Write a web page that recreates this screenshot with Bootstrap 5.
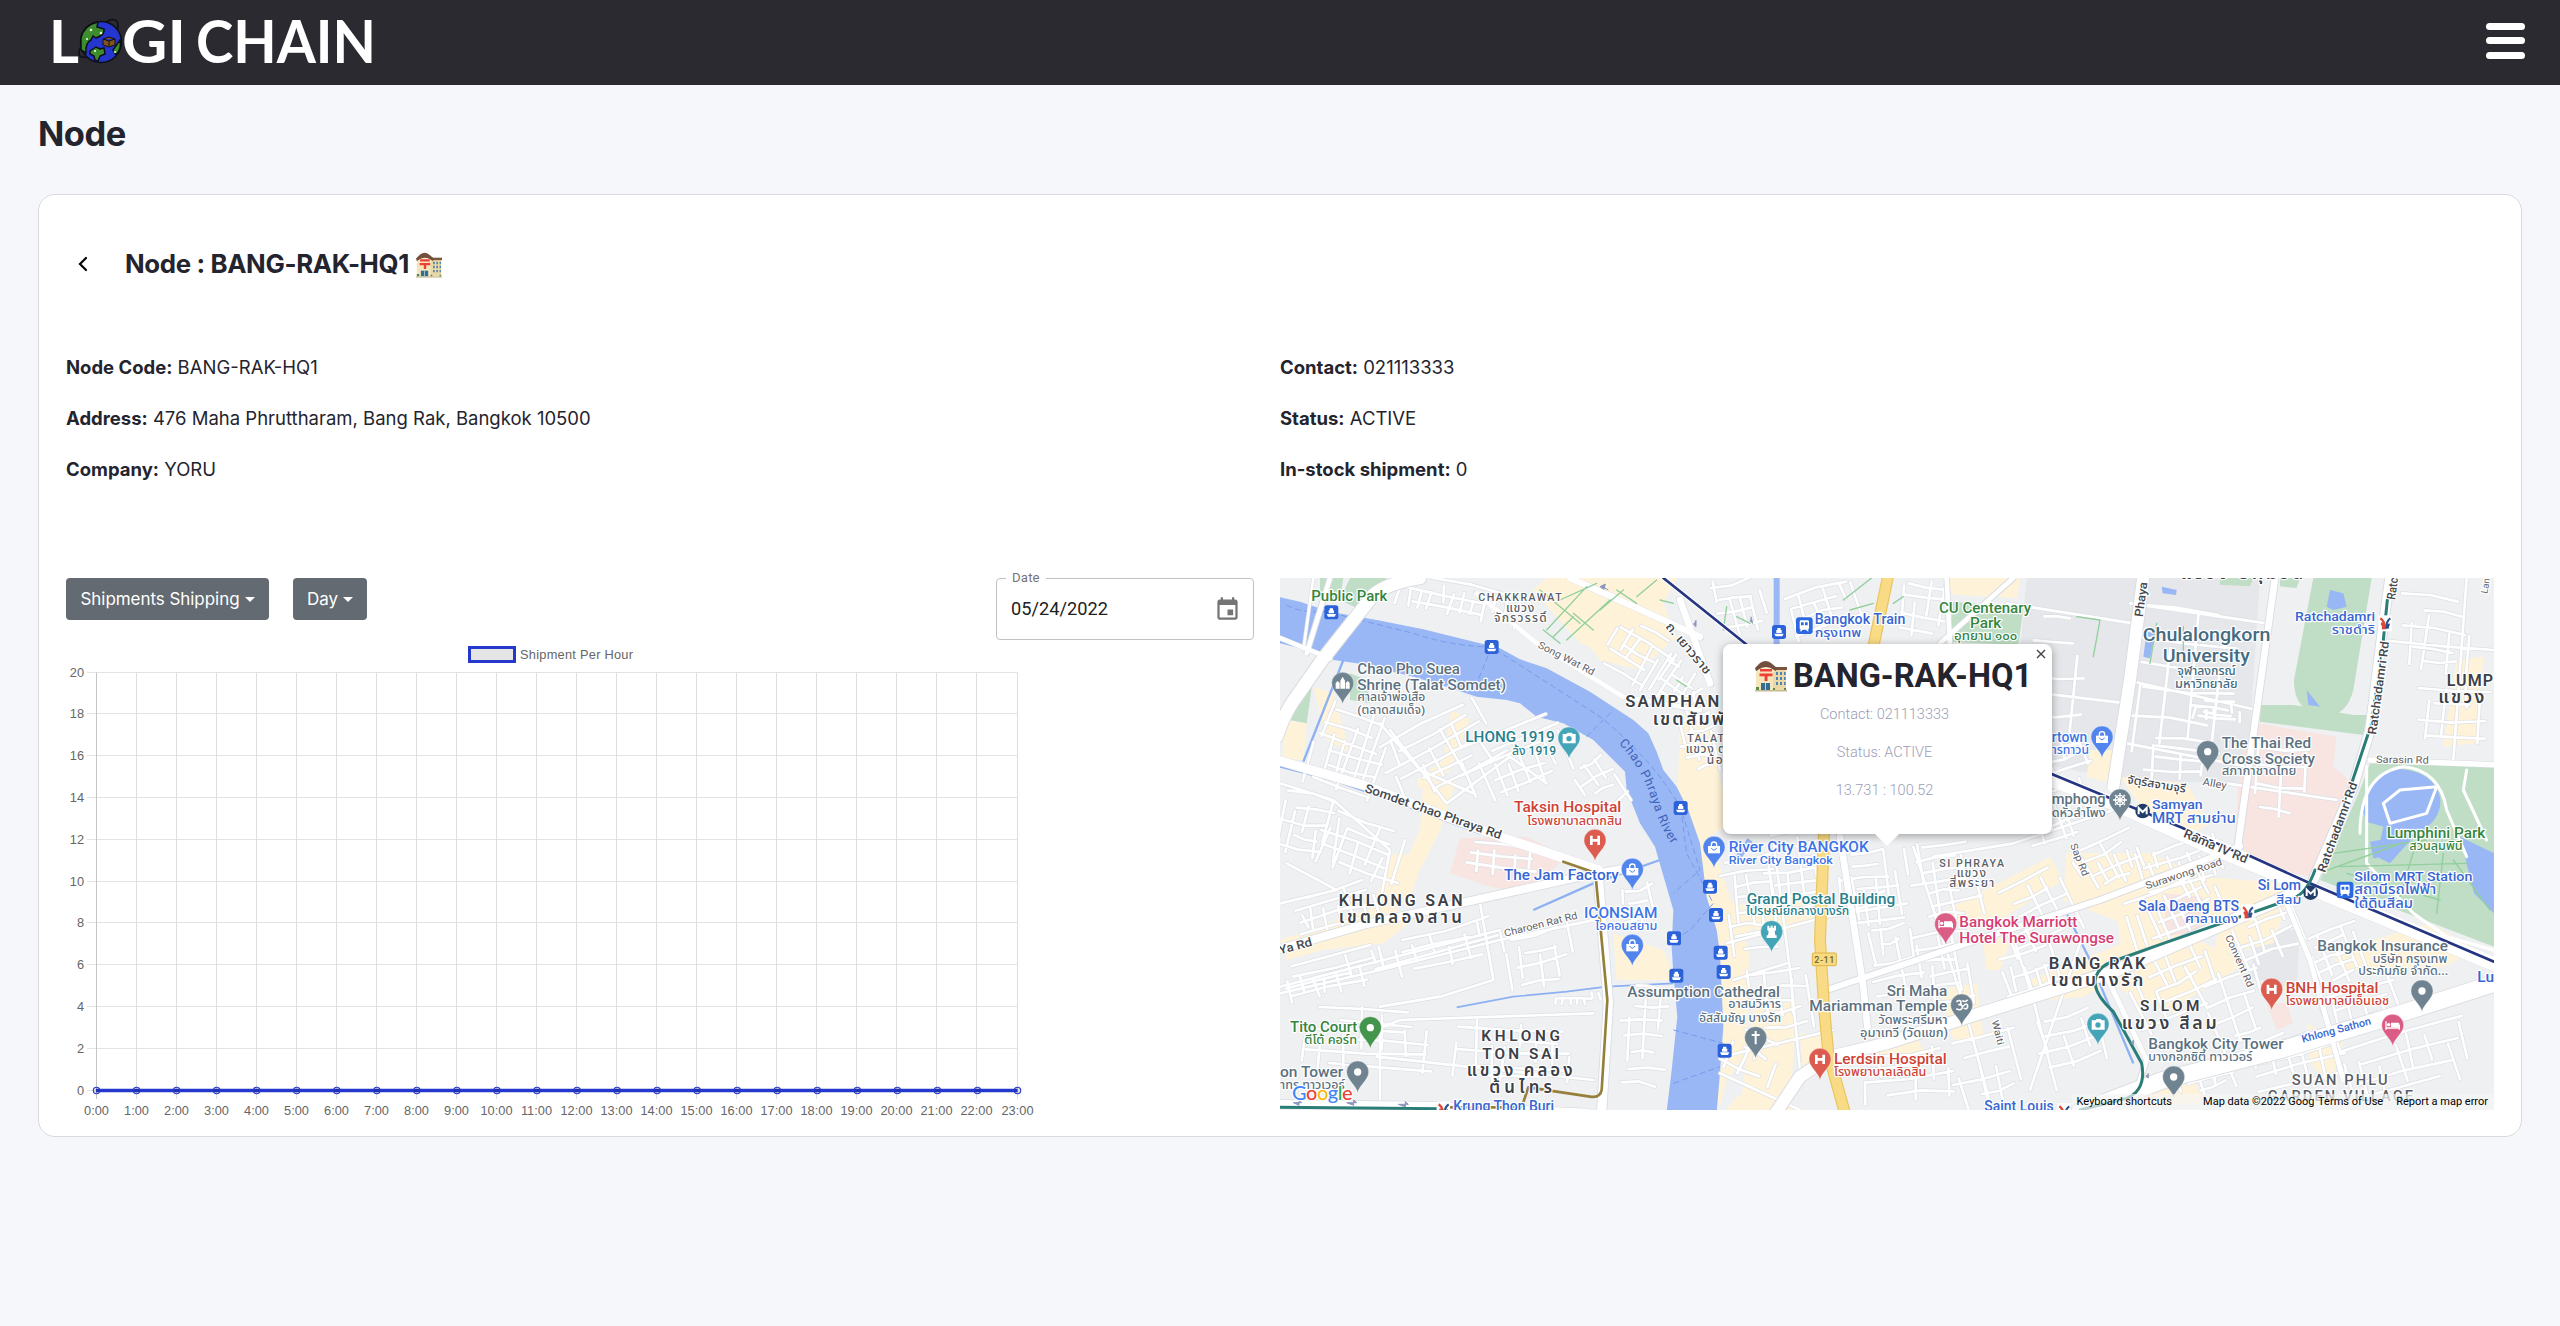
<!DOCTYPE html>
<html lang="en">
<head>
<meta charset="utf-8">
<meta name="viewport" content="width=device-width, initial-scale=1">
<title>Logi Chain - Node</title>
<link href="https://cdn.jsdelivr.net/npm/bootstrap@5.3.0/dist/css/bootstrap.min.css" rel="stylesheet">
<style>
body{background:#f5f7fb;color:#24242e;font-family:Inter,"Liberation Sans",sans-serif;font-size:18px}
.topbar{background:#2b2a30;height:85px;padding:0 35px 0 52px}
.brand-logo{width:324px;height:50px;margin-top:-1px;overflow:visible}
.brand-logo text{font-family:Lato,sans-serif;font-weight:700;font-size:58.5px;fill:#fff}
.menu-btn{width:39px;height:36px;margin-top:-4px}
.menu-btn span{height:7px;border-radius:4px;background:#fff}
.page-wrap{padding:0 38px}
.page-title{font-size:34.5px;font-weight:700;line-height:42px;margin:28px 0 39px;letter-spacing:-.5px}
.panel{background:#fff;border:1px solid #dadadc;border-radius:17px;height:943px;padding:0 27px}
.head-row{padding:49px 0 0 12px;height:159px}
.head-row .chev{width:10px;height:16px;margin:12px 37px 0 0}
.head-row h2{font-size:25.8px;font-weight:700;line-height:40px;margin:0 7px 0 0;letter-spacing:-.35px}
.info-line{line-height:27px;margin-bottom:24px;font-size:18.5px;white-space:nowrap}
.info-area{height:224px}
.kit-btn{background:#636a71;color:#fff;border:0;border-radius:4px;height:42px;padding:0 14px;font-size:17px;line-height:42px;white-space:nowrap}
.kit-btn:after{margin-left:5px;vertical-align:3px;border-top-width:5.5px;border-left-width:5px;border-right-width:5px}
.btn-a{width:203px;letter-spacing:-.05px}.btn-b{width:74px;margin-left:24px}
.tool-row{height:62px;padding-right:26px}
.date-box{width:258px;height:62px;border:1px solid #c2c2c2;border-radius:4px;font-family:Roboto,sans-serif;padding:0 12px 0 14px}
.date-box .lbl{top:-9px;left:9px;background:#fff;padding:0 6px;font-size:13.2px;line-height:16px;color:#757575;letter-spacing:.15px}
.date-box .val{font-size:18.2px;letter-spacing:.02px;color:#212121}
.chart-svg{display:block}
.chart-svg text{font-family:"Liberation Sans",Arial,sans-serif;font-size:12.8px;fill:#666}
.map-box{width:1214px;height:532px;background:#eff0f2}
.map-box svg.city{display:block;font-family:Roboto,"Noto Sans Thai","Noto Sans",sans-serif}
.info-pop{left:443px;top:66px;width:329px;height:190px;background:#fff;border-radius:8px;box-shadow:0 2px 8px rgba(0,0,0,.35);font-family:Roboto,sans-serif;padding:13px 0 0}
.info-pop:after{content:"";position:absolute;left:152px;top:190px;border:12px solid transparent;border-top-color:#fff}
.info-pop h3{font-size:32.6px;line-height:38px;font-weight:700;margin:0 0 0 32px;white-space:nowrap}
.info-pop h3 svg{margin:0 6px 0 0}
.info-pop p{font-size:14.5px;font-weight:300;line-height:18px;color:#9d9db5;margin:0 0 20px -6px;text-align:center}
.info-pop .facts{padding-top:11px}
.pop-x{top:4px;right:5px;width:12px;height:12px}
.credit{right:0;bottom:0;height:16px;background:rgba(245,245,245,.7);font:11px/16px Roboto,sans-serif;color:#000;padding:0 6px 0 5px;white-space:nowrap}
.f-case{stroke:#dcdfe4;stroke-width:12}.f-fill{stroke:#fff;stroke-width:8}
.roadset{fill:none;stroke-linejoin:round;stroke-linecap:round}
.lab{paint-order:stroke;stroke:#fff;stroke-width:7;stroke-linejoin:round}
.poi{fill:#5c717f;font-weight:500}.uni{fill:#456b80;font-weight:500}.grn{fill:#35853f;font-weight:500}
.blu{fill:#3766d2;font-weight:500}.blb{fill:#3c74e8;font-weight:500}.tea{fill:#26808c;font-weight:500}.red{fill:#cd4336;font-weight:500}
.pnk{fill:#d53c72;font-weight:500}.dis{fill:#3c4047;font-weight:600}.ara{fill:#5a5e65;font-weight:500}.str{fill:#5f6368}.stb{fill:#44474c;font-weight:500}
</style>
<script src="https://cdn.jsdelivr.net/npm/bootstrap@5.3.0/dist/js/bootstrap.bundle.min.js"></script>
</head>
<body>
<svg width="0" height="0" class="position-absolute"><defs>
<symbol id="office" viewBox="0 0 32 32">
<path d="M1 10h19v20H1z" fill="#f3e6bd"/><path d="M18 9h13v21H18z" fill="#ead9a6"/><path d="M17 7h15v3H17z" fill="#7b5540"/>
<path d="M0 8 5 3Q11-1 16 3l6 5-1 3Q11 5 1 11z" fill="#73503e"/><path d="M3 10Q11 4 19 10v2H3z" fill="#f8edcd"/>
<path d="M5 9h12v2.600H5zM4.500 13.500h13v2.800h-5V21H9.600v-4.700H4.500z" fill="#ee4035"/>
<path d="M21 12h2v3h-2zm4 0h2v3h-2zm4 0h1.700v3H29zm-8 5h2v3h-2zm4 0h2v3h-2zm4 0h1.700v3H29zm-8 5h2v3h-2zm4 0h2v3h-2zm4 0h1.700v3H29z" fill="#4e84b5"/>
<path d="M6 23h9v7H6z" fill="#376c91"/><path d="M10 23h1v7h-1z" fill="#b7d3dd"/><path d="M1 27h3v3H1zm17 1h2v2h-2zm11 0h2v2h-2z" fill="#5d8a45"/><path d="M0 30h32v1.500H0z" fill="#c8b994"/>
</symbol></defs></svg>

<nav class="topbar d-flex align-items-center justify-content-between">
<svg class="brand-logo" viewBox="52 17 324 50">
<text x="49" y="62.500" textLength="30" lengthAdjust="spacingAndGlyphs">L</text>
<text x="122" y="62.500" textLength="64" lengthAdjust="spacingAndGlyphs">GI</text>
<text x="196" y="62.500" textLength="180" lengthAdjust="spacingAndGlyphs">CHAIN</text>
<g stroke="#0d1014" stroke-width="1.500"><path d="M106 22Q117 16 118 25Q118 31 113 37M80 48Q76 59 87 57" fill="none"/><circle cx="101" cy="42" r="20.500" fill="#2436cf"/>
<path d="M98 22Q84 25 81 38L81 50 86 53Q85 43 91 40L93 36 96 38Q105 35 104 29L97 27z" fill="#3d8c2e"/>
<path d="M90 51l6-4 4 2 4-1 1 6-5 2-2 5-3-1-1-4-4-2zM113 50l7-10q2 8-4 15z" fill="#3d8c2e"/>
<path d="m103 39 6-2 6 2v6l-6 2-6-2zM103 39l6 2 6-2M109 41v5" fill="#81531a" stroke-width="1"/></g>
<g fill="#dfffd8"><circle cx="91" cy="30" r="1.300"/><circle cx="101" cy="33" r="1.300"/><circle cx="87" cy="39" r="1.100"/><circle cx="95" cy="51" r="1.100"/><circle cx="115" cy="52" r="1.100"/></g>
</svg>
<div class="menu-btn d-flex flex-column justify-content-between"><span></span><span></span><span></span></div>
</nav>

<main class="page-wrap">
<h1 class="page-title">Node</h1>
<section class="panel">
<div class="head-row d-flex align-items-start">
<svg class="chev" viewBox="0 0 10 16"><path d="M8 2 2 8l6 6" fill="none" stroke="#000" stroke-width="2.200" stroke-linecap="round"/></svg>
<h2>Node : BANG-RAK-HQ1</h2>
<svg width="26" height="26" class="mt-2"><use href="#office"/></svg>
</div>
<div class="row g-0 info-area">
<div class="col-6"><div class="info-line"><b>Node Code:</b> BANG-RAK-HQ1</div><div class="info-line"><b>Address:</b> 476 Maha Phruttharam, Bang Rak, Bangkok 10500</div><div class="info-line"><b>Company:</b> YORU</div></div>
<div class="col-6"><div class="info-line"><b>Contact:</b> 021113333</div><div class="info-line"><b>Status:</b> ACTIVE</div><div class="info-line"><b>In-stock shipment:</b> 0</div></div>
</div>
<div class="row g-0">
<div class="col-6">
<div class="tool-row d-flex align-items-start">
<button class="btn kit-btn btn-a dropdown-toggle">Shipments Shipping</button>
<button class="btn kit-btn btn-b dropdown-toggle">Day</button>
<div class="date-box position-relative d-flex align-items-center justify-content-between ms-auto"><span class="lbl position-absolute">Date</span><span class="val">05/24/2022</span>
<svg width="27" height="27" viewBox="0 0 24 24" fill="#757575"><path d="M17 12h-5v5h5v-5zM16 1v2H8V1H6v2H5c-1.110 0-1.990.9-1.990 2L3 19c0 1.100.89 2 2 2h14c1.100 0 2-.9 2-2V5c0-1.100-.9-2-2-2h-1V1h-2zm3 18H5V8h14v11z"/></svg></div>
</div>
<svg class="chart-svg" id="chart" width="1000" height="484" viewBox="66 640 1000 484"></svg>
</div>
<div class="col-6">
<div class="map-box position-relative overflow-hidden">
<svg class="city" width="1214" height="532" viewBox="0 24 3642 1596" preserveAspectRatio="none">
<defs>
<path id="pinshape" d="M0 0C-4-22-33-38-33-62A33 33 0 1 1 33-62C33-38 4-22 0 0z"/>
<path id="riverline" d="M1016 520Q1085 595 1115 690T1178 826"/>
<g id="ferry"><rect x="-21" y="-21" width="42" height="42" rx="8" fill="#2c62d9"/><path d="M-14 5h28l-4 8h-20zM-8 3V-6h3v-6h10v6h3V3z" fill="#fff"/></g>
<g id="train"><rect x="-25" y="-25" width="50" height="50" rx="9" fill="#2c68e2"/><path d="M-14-12q0-4 4-4h20q4 0 4 4V8q0 4-4 4l4 5h-5l-4-5h-10l-4 5h-5l4-5q-4 0-4-4z" fill="#fff"/><path d="M-10-10h8v9h-8zM2-10h8v9H2z" fill="#2c68e2"/></g>
<g id="mrt"><circle r="22" fill="#213c66"/><path d="M-12 10V-9l12 12L12-9v19" fill="none" stroke="#fff" stroke-width="6"/></g>
<g id="bts"><rect x="-20" y="-24" width="40" height="48" fill="#fff"/><path d="M-14-15Q0-6 0 18M-12 0Q-4 2-6 18" stroke="#dd4733" stroke-width="7" fill="none"/><path d="M16-15Q2-6 5 16M14 3Q8 4 9 16" stroke="#2b4d90" stroke-width="6" fill="none"/></g>
<g id="lanes"></g>
<g id="avenues">
<path d="M420 24Q320 40 280 75L130 265 35 400Q10 440-10 500" stroke-width="38"/>
<path d="M-10 570L250 645 660 800 955 900" stroke-width="28"/>
<path d="M-10 1140L260 1062 550 998 900 920 1020 898" stroke-width="24"/>
<path d="M953 900L985 1300 965 1625" stroke-width="28"/>
<path d="M0 1602L480 1608 920 1628" stroke-width="24"/>
<path d="M870 24L1150 150 1260 200M1200 90L1290 340" stroke-width="20"/>
<path d="M-10 200L150 265M150 24L80 250" stroke-width="14"/>
<path d="M590 70L770 220 1030 380 1260 420" stroke-width="14"/>
<path d="M1680 800L1750 1250 1762 1370" stroke-width="20"/>
<path d="M1640 1260L2060 1120 2460 990 2880 830" stroke-width="18"/>
<path d="M3090 950L2500 1205 2100 1330 1820 1420 1650 1460 1560 1520 1490 1625" stroke-width="36"/>
<path d="M3660 1235L3300 1350 3000 1440 2650 1530 2400 1625" stroke-width="50"/>
<path d="M2290 620L2500 700 2800 835 3200 1000 3660 1190" stroke-width="42"/>
<path d="M2590 20L2550 330 2500 650" stroke-width="36"/>
<path d="M2985 24L2940 350 2875 820" stroke-width="20"/>
<path d="M3330 24L3305 200 3270 480 3220 650 3100 930" stroke-width="28"/>
<path d="M3270 570L3660 585" stroke-width="16"/>
<path d="M2200 24L1980 220M2000 24L2010 230" stroke-width="14"/>
<path d="M2470 1200L2600 1470 2570 1560M3020 1000L3090 1170 3190 1530" stroke-width="15"/>
</g>
</defs>
<rect width="3642" height="1620" fill="#eff0f2"/>
<g fill="#e5e7ea"><path d="M2240 24L2940 24 2900 640 2520 630 2190 560zM2930 1080h130l-10 180-140-40z"/></g>
<g fill="#fef3d8">
<path d="M800 24L1190 24 1150 100 1190 200 1080 300 960 270 930 230 900 220 820 130 760 60zM100 350l60 20 50 180-70-40zM10 450l70 10-10 110-60-5zM515 420l55 30-60 150-90 60-10-30 80-60zM430 640l100-10-50 150-60 120-50-10 50-110zM340 850l90 10-40 130-60 30-50-20zM0 1110l320-110 80 50-90 70-180 20-110 30zM1000 1090l150 50 35 90-175 0z"/>
<path d="M1200 430l80 10 70 320-60 40 60 180 60 170-10 300-60 80-20 80-90-400-10-200-30-220zM1300 980l150 40-70 120-90-10zM1390 1030l180-60 40 80-160 60zM1420 1310l130-20-20 330h-150zM1560 1390l100 10-20 60-70 60zM1790 1400l120 0 30 60-140 0zM1980 1260l110-20 20 160-90 10zM1960 1040l350-180 40 70-220 140z"/>
<path d="M2110 1120l90-30-40 110-40 0zM2250 1230l380-150 80 40-300 160-120 10zM2360 850l250 0 300 130-200 150-360-140zM2500 900l520 40-60 140-440 40zM2430 540h80l-15 100-75-20zM2520 620l200 20 70 120-50 30-150-70zM2840 930l200 10-60 180-180 40zM2900 1180l-200 120-120 0-150-110 280-100zM2600 1160l120-20-30 190-60-10zM3150 1150l300-90 140 80-100 50-300 10zM3080 1360l110 60-40 120-60-60zM3530 270l80-10-20 260-100 10zM2580 1510l160 20 40 70-190 10zM1990 24l230 0-10 60-190-10zM1370 1580l130-10 50 60-220 0z"/>
</g>
<g fill="#f8e4e1"><path d="M540 805l200-5 120 60-120 110-110-20-120-40zM2930 460l240 40-10 90 70 60-140 270-230-50 20-300zM2650 970l120 10-10 100-100 20zM2960 1300l60 0 20 60-50 20z"/></g>
<g fill="#bfdec5">
<path d="M120 24h70l-10 60-60 10zM210 24l110 0-60 105-80-40zM30 450l70-130-20 140zM210 310l50 20 10 70-60-10zM2020 95l210 20-15 110-210-10zM3100 24h175L3220 360Q3200 440 3130 440Q3040 425 3042 330zM2940 405l100 0 180 30 40 0-10 60-310-40zM3270 580l372 10v540L3120 930 3160 840 3240 660zM2820 24h100l-10 25-90-5zM3000 24h60l-10 30-50-5z"/></g>
<g fill="#9ab7f5">
<path d="M0 82L60 95 150 125 290 150 430 178 560 210 660 235 720 268 800 295 930 365 1060 450 1105 490 1130 545 1150 600 1190 650 1225 720 1260 820 1280 980 1310 1080 1320 1150 1330 1370 1320 1510 1310 1625H1160L1175 1500 1192 1340 1180 1210 1175 1130 1180 1020 1145 900 1125 830 1080 760 1040 660 1035 605 940 510 850 460 770 440 720 400 680 390 590 380 500 350 400 320 230 280 160 270 60 235 0 220z"/>
<path d="M3248 720Q3260 610 3360 597Q3460 605 3480 680Q3490 750 3410 790L3330 880 3290 860 3310 770 3260 755zM3150 60l40 10 10 40-40 10-20-10zM3080 360l40 50-35-5zM2645 50l45 10-2 15-40-5zM2600 185l25 5-15 75-20-5zM3540 800l102 50v180l-60-60zM3270 815l60-10-40 60-10 0z"/>
<path d="M1490 24V230M1410 810L1370 870" stroke="#9ab7f5" stroke-width="18" fill="none"/></g>
<g fill="none" stroke="#8db0f3" stroke-width="7"><path d="M190 270L70 575M0 590L160 630 360 700 600 790M660 812L850 870M760 1020L940 940 1140 870M2360 1030L2425 1160 2560 1480"/><path d="M530 1312L700 1280 860 1265 980 1250 1180 1240" stroke-width="5"/></g>
<g fill="none" stroke="#779bea" stroke-width="3" stroke-dasharray="18 10"><path d="M20 105Q60 130 140 125L400 190Q520 230 635 231L960 440Q1120 570 1202 714L1260 900 1180 970M635 231L590 340M920 500L1000 420M1202 714L1220 850 1300 1000 1230 1080 1182 1110M1180 1380L1330 1420M1180 1540L1320 1490"/></g>
<g class="roadset"><use href="#lanes" class="f-case"/><use href="#lanes" class="f-fill"/></g>
<g class="roadset" stroke="#d9dce1"><use href="#avenues" transform="translate(-2.500 -2)"/><use href="#avenues" transform="translate(2.500 2)"/></g>
<g class="roadset" stroke="#fff"><use href="#avenues"/></g>
<path d="M3240 790Q3240 610 3370 590Q3480 600 3500 720L3560 860M3310 700l50-40 110-10M3310 700l20 60 110-30 30-80M3260 590v290l140 150 100 70 140 40M3560 600l-10 60 70 150" class="roadset" stroke="#fff" stroke-width="9"/>
<g class="roadset" stroke="#91cf9d" stroke-width="4"><path d="M780 60l120 100M800 180l120-130M840 90l110-50M860 210l130-120M880 130l60 50M960 120l70-60M1010 60l60 40M1070 80l60-50M790 180l50 40M820 200l60-60M1140 90l40 10M1190 330l30 20M1340 110l-10 70M1370 140l40 20M1690 90l90-70M1710 120l70-20M1840 100l30-20M2390 140l70 10-20 110M2630 160l-20 120M2710 170v100M3160 850l280-40M3180 890l380-10M3200 910l280 80M3420 780l-60 200M3490 850l-20 180M3520 870l110 150M3130 905l220-80"/></g>
<g class="roadset"><path d="M1825 15L1780 230 1632 790 1620 1110 1632 1310 1645 1450 1695 1630" stroke="#eac45e" stroke-width="36"/><path d="M1825 15L1780 230 1632 790 1620 1110 1632 1310 1645 1450 1695 1630" stroke="#f9db85" stroke-width="29"/></g>
<g class="roadset"><path d="M1150 24L1260 112 1420 240 2200 560 2315 612 2480 680 2710 775 2810 815 3090 940 3642 1175" stroke="#fff" stroke-width="14"/><path d="M1150 24L1260 112 1420 240 2200 560 2315 612 2480 680 2710 775M2910 858L3090 940 3642 1175" stroke="#253582" stroke-width="8"/>
<path d="M2710 775L2900 860" stroke="#253582" stroke-width="7" stroke-dasharray="8 14"/>
<path d="M3322 90L3310 210M3265 490L3215 640M3105 900Q3080 970 3040 985L2650 1120 2510 1170Q2445 1190 2445 1240Q2450 1280 2500 1325L2585 1480Q2600 1560 2540 1585L2400 1620M0 1612L480 1616" stroke="#2b7d78" stroke-width="9"/><path d="M3310 210L3270 480M3210 650L3130 880" stroke="#2b7d78" stroke-width="6" stroke-dasharray="6 12"/>
<path d="M850 875L930 903Q945 905 948 930L965 1110 982 1290 965 1560Q960 1585 930 1580L745 1552 725 1612 510 1612" stroke="#95803b" stroke-width="8"/></g>
<g fill="#8d96bd" stroke="#8d96bd" stroke-width="3"><path d="M985 60l-18-10M960 50l16-8-4 16zM1248 150v20l-8-8M1413 140l5 20-8-8M40 1598h25l-8-8v16zM200 1598h30l-9-8v16zM355 1603h30l-9-8v16zM2560 1410v14l-8-6M2605 1510v14l-8-6"/></g>
<g id="marks"></g>
<text class="lab" style="stroke:#9ab7f5" font-size="38" fill="#3d62b8"><textPath href="#riverline" textLength="345">Chao Phraya River</textPath></text>
<rect x="1597" y="1149" width="72" height="38" rx="3" fill="#f8db80" stroke="#dbb445" stroke-width="3"/><text x="1603" y="1178" font-size="27" textLength="60" fill="#71602b" font-weight="500">2-11</text>
<g id="names"></g>
<text class="lab" x="36" y="1590" font-size="60" font-weight="500" textLength="182" style="font-family:Lato,sans-serif"><tspan fill="#4285f4">G</tspan><tspan fill="#ea4335">o</tspan><tspan fill="#fbbc05">o</tspan><tspan fill="#4285f4">g</tspan><tspan fill="#34a853">l</tspan><tspan fill="#ea4335">e</tspan></text>
</svg>
<div class="info-pop position-absolute">
<h3 class="d-flex align-items-center"><svg width="32" height="32"><use href="#office"/></svg>BANG-RAK-HQ1</h3>
<svg class="pop-x position-absolute" viewBox="0 0 12 12"><path d="M2 2l8 8M10 2l-8 8" stroke="#444" stroke-width="1.400"/></svg>
<div class="facts"><p>Contact: 021113333</p><p>Status: ACTIVE</p><p>13.731 : 100.52</p></div>
</div>
<div class="credit position-absolute d-flex"><span>Keyboard shortcuts</span><span class="overflow-hidden" style="margin-left:31px;width:111px">Map data ©2022 Google</span><span class="ms-1">Terms of Use</span><span style="margin-left:13px">Report a map error</span></div>
</div>
</div>
</div>
</section>
</main>
<script>
// Hourly shipment chart
(function(){
  const L=96.5,T=672.5,W=921,H=418;let s='';
  for(let i=0;i<=10;i++){const y=Math.round(T+H*i/10)-.5;s+=`<path d="M87 ${y}H${L+W}" stroke="#e3e3e3"/><text x="84" y="${y+4.5}" text-anchor="end">${20-2*i}</text>`}
  for(let i=0;i<24;i++){const x=Math.round(L+W*i/23)-.5;s+=`<path d="M${x} ${T}V1099" stroke="${i?'#dedede':'#c4c4c4'}"/><text x="${x}" y="1114.500" text-anchor="middle">${i}:00</text>`}
  s+='<path d="M96 1090.500H1017.500" stroke="#2538ce" stroke-width="3.400"/>';
  for(let i=0;i<24;i++)s+=`<circle cx="${L+W*i/23}" cy="1090.500" r="3.200" fill="rgba(0,0,0,.12)" stroke="#2538ce" stroke-width="1.100"/>`;
  s+='<rect x="469.500" y="647.500" width="45" height="14" fill="#e5e5e5" stroke="#2538ce" stroke-width="3"/><text x="520" y="659" textLength="113">Shipment Per Hour</text>';
  document.getElementById('chart').innerHTML=s;
})();
// Side streets: centre x, y, width, height, angle, columns, rows
(function(){
  let seed=7;const r=()=>(seed=(seed*16807)%2147483647)/2147483647;
  const zones=[[520,80,420,110,12,13,3],[200,540,240,260,18,8,6],[90,760,200,200,12,6,5],[480,540,360,220,-28,8,6],[700,560,340,200,-22,8,5],[960,640,150,180,-30,4,4],[250,830,280,180,20,6,5],[670,860,220,110,8,4,3],
  [170,1010,260,130,-15,7,4],[480,1130,420,120,-14,8,4],[150,1210,300,120,-13,8,4],[780,1160,260,180,-12,5,4],[250,1400,420,200,3,7,6],[700,1450,380,190,3,8,5],[890,1285,150,34,0,7,1],[1090,1400,150,340,2,3,7],[1075,1000,110,130,-12,3,3],
  [1080,250,220,190,30,6,5],[1180,330,130,120,-60,4,4],[1250,480,120,260,-12,4,7],[1380,100,160,180,-12,5,4],[1630,110,240,160,-18,6,4],[1920,110,160,180,8,4,4],[1410,1000,170,300,-8,5,8],[1540,900,180,260,-6,4,7],[1770,950,200,230,-8,6,7],[1990,930,240,240,-10,6,7],[1500,1290,220,200,-6,5,5],[1420,1450,180,150,25,4,3],[1840,1170,170,240,-10,4,5],[1990,1190,170,240,-8,5,6],
  [1880,1510,320,160,-6,6,4],[2120,1480,240,240,-16,4,4],[2270,1020,260,220,-24,5,5],[2250,1200,200,160,-18,6,3],[2330,730,240,160,-20,7,5],[2480,870,220,160,-25,7,4],[2380,1400,240,180,-15,4,4],[2700,880,270,140,-18,9,4],[2680,1010,310,170,-22,10,4],[2960,1080,230,180,-20,6,4],[2680,1240,300,220,-25,8,5],[2880,1330,220,280,-20,4,5],[3170,1150,180,180,-20,5,5],[3230,1300,260,150,-17,6,3],[3050,1470,300,160,-15,6,4],[3380,1470,420,200,-16,8,4],[2780,1520,200,120,-16,4,3],
  [2700,330,330,500,6,4,6],[2810,420,170,60,6,5,4],[2320,280,220,400,5,2,4],[3000,620,200,240,6,3,4],[3480,180,250,260,6,4,5],[3520,430,220,200,4,4,4],[2700,560,220,150,5,3,3],[2360,560,160,120,-18,3,3]];
  let d='';
  for(const [cx,cy,w,h,a,nx,ny] of zones){const c=Math.cos(a*Math.PI/180),s=Math.sin(a*Math.PI/180);
    const p=(u,v)=>(cx+u*c-v*s).toFixed(0)+' '+(cy+u*s+v*c).toFixed(0);
    for(let j=0;j<ny;j++){const v=-h/2+h*(j+.5+(r()-.5)*.3)/ny,u0=-w/2+w*r()*.35,u1=w/2-w*r()*.35;d+='M'+p(u0,v)+'L'+p(u0+(u1-u0)/2,v+(r()-.5)*14)+'L'+p(u1,v+(r()-.5)*20)}
    for(let i=0;i<nx;i++){const u=-w/2+w*(i+.5+(r()-.5)*.3)/nx,v0=-h/2+h*r()*.6,v1=Math.min(h/2,v0+h*(.3+r()*.5));d+='M'+p(u,v0)+'L'+p(u+(r()-.5)*18,v1)}
  }
  d+='M0 640L160 690 330 840 300 1000M330 480L500 700 690 560 800 640M300 460L420 600 580 670M0 1270L300 1200 660 1110 990 1040M0 1250L660 1080M100 24L70 240M20 880L170 960 0 1000M300 1310L480 1280 640 1230M310 1370L360 1350 940 1330M300 1370V1625M290 1460L560 1490 940 1530M600 1000L640 1230M1340 1120L1640 1040 1880 1000M1360 1230L1520 1180M1480 810L1530 1200 1560 1500M1330 1460L1660 1380M1320 1510L1560 1620M1900 830L2050 1300 2130 1600M1960 860L2200 820 2500 720M2200 1100L2260 1290 2330 1560M2400 1120L2250 1560M2540 330L2930 420M2540 520L2900 590M2550 100L2960 160M2840 640L3170 690M3300 210L3500 230 3642 240M3560 24L3520 570M2180 100L2560 160M2200 360L2540 400';
  document.getElementById('lanes').innerHTML=`<path d="${d}"/>`;
})();
// Markers and place names; every group is [offset x, offset y, items]
(function(){
  const glyph={dot:'<circle cy="-62" r="11" fill="#fff"/>',
  H:'<path d="M-11-76v28M11-76v28M-11-62h22" stroke="#fff" stroke-width="8"/>',
  bag:'<path d="M-18-66h36v22h-36z" fill="#fff"/><path d="M-8-64v-6a8 8 0 0 1 16 0v6" stroke="#fff" stroke-width="4" fill="none"/><path d="M-8-60q8 13 16 0" stroke="#4d7de8" stroke-width="3" fill="none"/>',
  cam:'<path d="M-19-74h11l4-4h12l4 4h8v28h-39z" fill="#fff"/><circle cy="-60" r="8" fill="#44a4b8"/>',
  cross:'<path d="M0-82v40M-12-70h24" stroke="#fff" stroke-width="6"/>',
  bed:'<path d="M-20-74v25M-20-54h40M20-64v15" stroke="#fff" stroke-width="4"/><path d="M-5-70h21q4 0 4 4v10H-5z" fill="#fff"/><circle cx="-12" cy="-64" r="5" fill="#fff"/>',
  temple:'<path d="M-21-46v-17l6-6 6 6v17zM-7-46v-24l7-12 7 12v24zM9-46v-17l6-6 6 6v17z" fill="#fff"/>',
  rook:'<path d="M-13-80h6v6h4v-6h6v6h4v-6h6v14l-4 3 2 12h4v8h-30v-8h4l2-12-4-3z" fill="#fff"/>',
  wheel:'<g stroke="#fff" stroke-width="4" fill="none"><circle cy="-62" r="14"/><path d="M0-83v42M-21-62h42M-15-77l30 30M15-77l-30 30"/></g>',
  om:'<path d="M-16-72q14-8 14 3 0 6-8 6 12-2 12 8-3 12-18 4M4-58q12-14 14 0 0 10-12 6M2-76q8 8 16-2" stroke="#fff" stroke-width="5" fill="none"/>'};
  const G='#6f8390',B='#5284ee',T='#44a4b8',R='#dc5d50',P='#db5d86';
  const pins=[[188,402,G,'temple'],[867,566,T,'cam'],[945,873,R,'H'],[1057,960,B,'bag'],[1057,1188,B,'bag'],[271,1435,'#44954c','dot'],[233,1568,G,'dot'],[2466,563,B,'bag'],[1302,894,B,'bag'],[1475,1147,T,'rook'],[1997,1124,P,'bed'],[2045,1367,G,'om'],[1427,1465,G,'cross'],[1620,1530,R,'H'],[2454,1425,T,'cam'],[2520,752,G,'wheel'],[2783,607,G,'dot'],[2975,1320,R,'H'],[3426,1325,G,'dot'],[3338,1428,P,'bed'],[2681,1583,G,'dot']];
  let m='';
  const put=(id,l)=>l.forEach(([x,y])=>m+=`<use href="#${id}" x="${x}" y="${y}"/>`);
  put('ferry',[[154,127],[635,231],[1202,714],[1182,1105],[1189,1217],[1497,186],[1290,950],[1308,1035],[1322,1148],[1331,1206],[1334,1442]]);
  put('train',[[1573,167],[3195,960]]);put('mrt',[[2588,723],[3092,968]]);put('bts',[[3315,160],[2903,1027],[490,1618],[2352,1624]]);
  for(const [x,y,c,k] of pins)m+=`<g transform="translate(${x} ${y})"><use href="#pinshape" fill="${c}" stroke="#fff" stroke-opacity=".5" stroke-width="2"/>${glyph[k]}</g>`;
  document.getElementById('marks').innerHTML=m;
  const sets=[[0,0,[[94,92,228,42,'grn','Public Park'],[595,94,250,32,'ara','CHAKKRAWAT'],[678,125,85,30,'ara','แขวง'],[642,157,158,30,'ara','จักรวรรดิ์'],[772,232,186,30,'str','Song Wat Rd',27],[1155,170,190,34,'stb','ถ. เยาวราช',50],[232,311,308,43,'poi','Chao Pho Suea'],[232,359,446,43,'poi','Shrine (Talat Somdet)'],[232,394,204,32,'poi','ศาลเจ้าพ่อเสือ'],[232,431,204,32,'poi','(ตลาดสมเด็จ)'],[1036,411,282,50,'dis','SAMPHAN'],[1118,465,215,44,'dis','เขตสัมพั'],[1222,515,110,32,'ara','TALAT'],[1217,548,120,30,'ara','แขวง ต'],[1280,582,48,30,'ara','น้อ'],[556,517,268,43,'tea','LHONG 1919'],[696,554,132,34,'tea','ล้ง 1919'],[252,665,432,37,'stb','Somdet Chao Phraya Rd',19.3],[702,727,322,44,'red','Taksin Hospital'],[742,765,284,34,'red','โรงพยาบาลตากสิน']]],
  [0,810,[[672,120,344,43,'blu','The Jam Factory'],[176,197,372,48,'dis','KHLONG SAN'],[176,248,370,42,'dis','เขตคลองสาน'],[675,290,226,30,'str','Charoen Rat Rd',-14],[0,343,102,36,'stb','Ya Rd',-15],[912,233,220,43,'blb','ICONSIAM'],[946,271,186,34,'blb','ไอคอนสยาม'],[1042,472,458,42,'poi','Assumption Cathedral'],[30,577,202,43,'grn','Tito Court'],[73,612,158,33,'grn','ตีโต้ คอร์ท'],[604,603,236,46,'dis','KHLONG'],[607,656,230,46,'dis','TON SAI'],[560,708,318,42,'dis','แขวง คลอง'],[628,760,188,42,'dis','ต้นไทร'],[0,711,190,43,'poi','on Tower'],[0,748,194,34,'poi','าทร ทาวเวอร์'],[520,812,302,42,'blu','Krung Thon Buri']]],
  [1200,0,[[404,161,272,42,'blu','Bangkok Train'],[404,200,140,36,'blu','กรุงเทพ'],[777,128,276,44,'grn','CU Centenary'],[870,174,94,44,'grn','Park'],[822,211,190,34,'grn','อุทยาน ๑๐๐'],[1115,515,107,43,'blb','rtown'],[1115,552,112,34,'blb','ารทาวน์'],[1115,703,162,42,'poi','mphong'],[1115,740,162,34,'poi','ดหัวลำโพง']]],
  [1200,810,[[146,36,420,42,'blb','River City BANGKOK'],[146,73,312,35,'blb','River City Bangkok'],[778,80,194,32,'ara','SI PHRAYA'],[830,110,88,30,'ara','แขวง'],[808,142,135,30,'ara','สี่พระยา'],[1170,15,103,30,'str','Sap Rd',68],[200,191,446,42,'tea','Grand Postal Building'],[198,226,310,34,'tea','ไปรษณีย์กลางบางรัก'],[145,505,158,34,'poi','อาสนวิหาร'],[57,545,246,34,'poi','อัสสัมชัญ บางรัก'],[838,262,354,44,'pnk','Bangkok Marriott'],[838,308,464,44,'pnk','Hotel The Surawongse'],[1106,387,291,50,'dis','BANG RAK'],[1112,438,278,44,'dis','เขตบางรัก'],[620,467,182,42,'poi','Sri Maha'],[388,513,414,42,'poi','Mariamman Temple'],[595,552,208,34,'poi','วัดพระศรีมหา'],[540,590,264,34,'poi','อุมาเทวี (วัดแขก)'],[935,543,76,29,'str','Waiti',76],[462,672,338,42,'red','Lerdsin Hospital'],[462,708,277,34,'red','โรงพยาบาลเลิดสิน'],[913,812,208,42,'blu','Saint Louis']]],
  [2400,0,[[300,28,370,46,'dis','แขวง ปทุมวัน'],[188,142,105,36,'stb','Phaya',-82],[188,214,383,54,'uni','Chulalongkorn'],[248,275,262,54,'uni','University'],[292,315,175,34,'uni','จุฬาลงกรณ์'],[285,353,188,34,'uni','มหาวิทยาลัย'],[645,153,240,41,'blu','Ratchadamri'],[755,193,130,36,'blu','ราชดำริ'],[888,495,282,36,'stb','Ratchadamri Rd',-82],[945,90,66,36,'stb','Ratc',-82],[735,910,285,36,'stb','Ratchadamri Rd',-70],[1222,72,46,28,'str','Lan',-80],[1100,348,139,48,'dis','LUMP'],[1075,400,138,44,'dis','แขวง'],[425,534,268,42,'poi','The Thai Red'],[425,582,280,42,'poi','Cross Society'],[425,615,224,34,'poi','สภากาชาดไทย'],[888,578,158,30,'str','Sarasin Rd',1],[140,640,178,32,'stb','จัตุรัสจามจุรี',9],[367,645,72,32,'str','Alley',10],[216,716,152,41,'blu','Samyan'],[216,758,252,40,'blu','MRT สามย่าน'],[308,800,205,38,'stb','Rama IV Rd',23],[920,805,296,43,'grn','Lumphini Park'],[988,840,160,35,'grn','สวนลุมพินี']]],
  [2400,810,[[200,148,240,30,'str','Surawong Road',-18],[533,150,130,43,'blu','Si Lom'],[588,192,76,36,'blu','สีลม'],[823,122,354,41,'blu','Silom MRT Station'],[823,162,246,37,'blu','สถานีรถไฟฟ้า'],[823,204,176,37,'blu','ใต้ดินสีลม'],[175,212,302,42,'blu','Sala Daeng BTS'],[315,250,160,36,'blu','ศาลาแดง'],[435,290,168,30,'str','Convent Rd',66],[180,514,178,46,'dis','SILOM'],[125,567,285,44,'dis','แขวง สีลม'],[617,460,278,42,'red','BNH Hospital'],[617,495,310,34,'red','โรงพยาบาลบีเอ็นเอช'],[712,333,392,42,'poi','Bangkok Insurance'],[878,370,224,34,'poi','บริษัท กรุงเทพ'],[835,406,270,34,'poi','ประกันภัย จำกัด...'],[1192,427,50,42,'blu','Lu'],[668,608,214,32,'blu','Khlong Sathon',-15],[205,627,406,42,'poi','Bangkok City Tower'],[205,663,312,34,'poi','บางกอกซิตี้ ทาวเวอร์'],[635,735,288,44,'ara','SUAN PHLU'],[563,782,436,44,'ara','GARDEN VILLAGE']]]];
  let t='';
  for(const [ox,oy,l] of sets)for(const [x,y,w,s,c,n,a] of l){const thai=/[\u0e00-\u0e7f]/.test(n),wide=c=='dis'||c=='ara';
    const mode=wide?'spacing':'spacingAndGlyphs',size=thai?s*(wide?1.2:1.08):s;
    t+=`<text class="lab ${c}" font-size="${size}" textLength="${w}" lengthAdjust="${mode}" transform="translate(${x+ox} ${y+oy}) rotate(${a||0})">${n}</text>`}
  document.getElementById('names').innerHTML=t;
})();
</script>
</body>
</html>
